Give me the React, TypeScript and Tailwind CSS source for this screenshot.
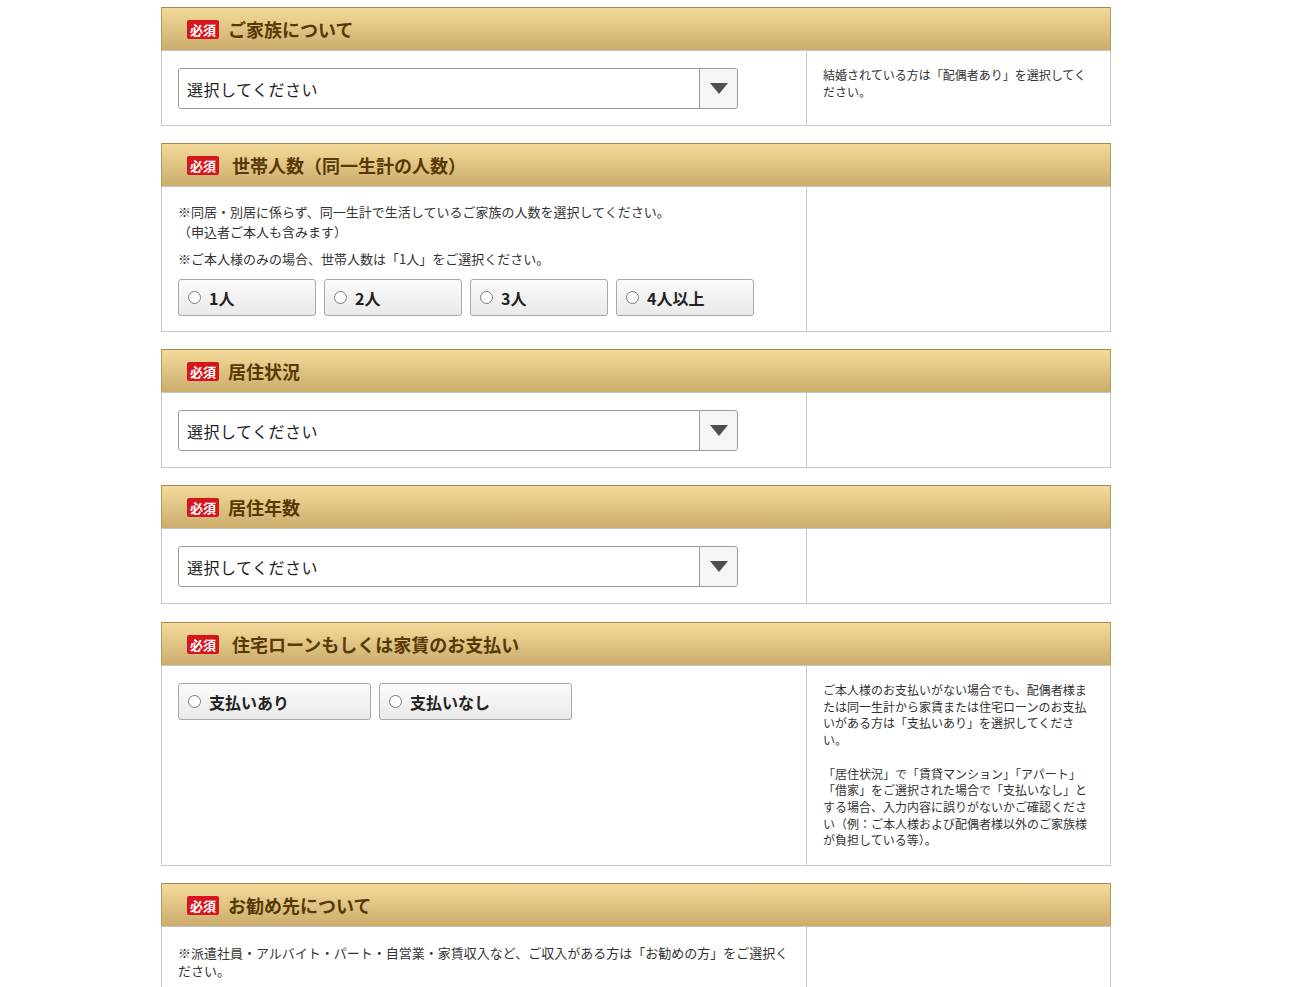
import type { ReactNode } from 'react'

const font = { fontFamily: '"Noto Sans CJK JP", "Noto Sans", sans-serif' }

function Section({
  title,
  note,
  children,
  className = 'mb-[17px]',
}: {
  title: string
  note?: ReactNode
  children: ReactNode
  className?: string
}) {
  return (
    <section className={className}>
      {/* Header */}
      <div className="flex h-[44px] items-center gap-[9px] border-t border-x border-t-[#a3894e] border-x-[#b89c5c] border-b border-b-[#c4c4c4] bg-gradient-to-b from-[#f4da9a] to-[#cbad6c] pl-[25px]">
        <span className="rounded-[2px] bg-[#d5171d] px-[3px] text-[13px] font-bold leading-[19px] text-white">必須</span>
        <h2 className="whitespace-pre text-[18px] font-bold leading-none text-[#573906]">{title}</h2>
      </div>
      {/* Body */}
      <div className="flex border-x border-b border-[#c8c8c8] bg-white">
        <div className="w-[645px] shrink-0 border-r border-[#c8c8c8] px-[16px] pt-[17px] pb-[16px]">{children}</div>
        <div className="flex-1 px-[16px] pt-[16px] pb-[16px] text-[12px] leading-[16.7px] text-[#333]">{note}</div>
      </div>
    </section>
  )
}

function SelectBox() {
  return (
    <div className="flex h-[41px] w-[560px] items-stretch rounded-[3px] border border-[#9a9a9a] bg-white">
      <div className="flex flex-1 items-center pl-[8px] text-[16px] tracking-[0.5px] text-[#222]">選択してください</div>
      <div className="flex w-[38px] items-center justify-center rounded-r-[3px] border-l border-[#9a9a9a] bg-[#f5f5f5]">
        <svg width="18" height="11" viewBox="0 0 18 11">
          <path d="M0 0 H18 L9 11 Z" fill="#4f4f4f" />
        </svg>
      </div>
    </div>
  )
}

function RadioButton({ label, width }: { label: string; width: string }) {
  return (
    <label className={`${width} flex h-[37px] items-center gap-[8px] rounded-[3px] border border-[#a8a8a8] bg-gradient-to-b from-[#fbfbfb] to-[#e9e9e9] pl-[9px]`}>
      <span className="h-[13px] w-[13px] rounded-full border border-[#7a7a7a] bg-white" />
      <span className="text-[16px] font-bold text-[#222]">{label}</span>
    </label>
  )
}

export default function App() {
  return (
    <div className="min-h-screen bg-white pt-[7px] pl-[161px]" style={font}>
      <div className="w-[950px]">
        <Section
          title="ご家族について"
          note={<p>結婚されている方は「配偶者あり」を選択してください。</p>}
        >
          <SelectBox />
        </Section>

        <Section title=" 世帯人数（同一生計の人数）">
          <div className="-mt-[2px] text-[13px] leading-[20px] text-[#333]">
            <p>
              ※同居・別居に係らず、同一生計で生活しているご家族の人数を選択してください。
              <br />
              （申込者ご本人も含みます）
            </p>
            <p className="mt-[7px]">※ご本人様のみの場合、世帯人数は「1人」をご選択ください。</p>
          </div>
          <div className="mt-[10px] -mb-[1px] flex gap-[8px]">
            <RadioButton label="1人" width="w-[138px]" />
            <RadioButton label="2人" width="w-[138px]" />
            <RadioButton label="3人" width="w-[138px]" />
            <RadioButton label="4人以上" width="w-[138px]" />
          </div>
        </Section>

        <Section title="居住状況">
          <SelectBox />
        </Section>

        <Section title="居住年数" className="mb-[18px]">
          <SelectBox />
        </Section>

        <Section
          title=" 住宅ローンもしくは家賃のお支払い"
          note={
            <p>
              ご本人様のお支払いがない場合でも、配偶者様または同一生計から家賃または住宅ローンのお支払いがある方は「支払いあり」を選択してください。
              <br />
              <br />
              「居住状況」で「賃貸マンション」「アパート」「借家」をご選択された場合で「支払いなし」とする場合、入力内容に誤りがないかご確認ください（例：ご本人様および配偶者様以外のご家族様が負担している等）。
            </p>
          }
        >
          <div className="flex h-[166px] items-start gap-[8px]">
            <RadioButton label="支払いあり" width="w-[193px]" />
            <RadioButton label="支払いなし" width="w-[193px]" />
          </div>
        </Section>

        <Section title="お勧め先について">
          <div className="min-h-[120px] text-[13px] leading-[18px] text-[#333]">
            <p>※派遣社員・アルバイト・パート・自営業・家賃収入など、ご収入がある方は「お勧めの方」をご選択ください。</p>
          </div>
        </Section>
      </div>
    </div>
  )
}
